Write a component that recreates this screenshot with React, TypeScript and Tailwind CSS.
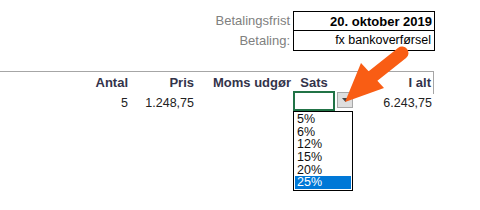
import React from "react";

const items = ["5%", "6%", "12%", "15%", "20%", "25%"];

export default function App() {
  return (
    <div
      className="relative w-[480px] h-[210px] overflow-hidden bg-white"
      style={{ fontFamily: '"Liberation Sans", Arial, sans-serif' }}
    >
      {/* Top info box */}
      <div className="flex pt-[11px]">
        <div className="w-[293px] pr-[3px] flex flex-col items-end text-[13px] text-[#808080]">
          <div className="h-[20px] leading-[20px]">Betalingsfrist</div>
          <div className="h-[20px] leading-[20px]">Betaling:</div>
        </div>
        <div className="w-[142px] border border-black">
          <div className="h-[19px] leading-[19px] text-right pr-[2px] text-[13px] font-bold text-black border-b border-black">
            20. oktober 2019
          </div>
          <div className="h-[19px] leading-[19px] text-right pr-[3px] text-[12.5px] text-black">
            fx bankoverførsel
          </div>
        </div>
      </div>

      {/* Table */}
      <div className="mt-[20px] w-[434px]">
        <div className="grid grid-cols-[130px_66px_97px_42px_99px] h-[20px] border-t border-[#a6a6a6] text-[13px] font-bold text-[#33334a] leading-[22px]">
          <div className="text-right pr-[2px]">Antal</div>
          <div className="text-right pr-[2px]">Pris</div>
          <div className="text-right pr-[2px]">Moms udgør</div>
          <div className="text-center">Sats</div>
          <div className="text-right pr-[2px] border-r border-[#a6a6a6]">I alt</div>
        </div>
        <div className="grid grid-cols-[130px_66px_97px_42px_99px] h-[20px] text-[12.5px] text-[#222] leading-[24px]">
          <div className="text-right pr-[2px]">5</div>
          <div className="text-right pr-[2px]">1.248,75</div>
          <div></div>
          <div className="relative">
            <div className="h-[20px] w-[42px] border-2 border-[#217346]"></div>
            <div className="absolute right-[-1px] bottom-[-1px] w-[4px] h-[4px] bg-[#217346] border border-white"></div>
            {/* dropdown button */}
            <div className="absolute left-[44px] top-[1px] w-[16px] h-[16px] bg-[#dedede] border border-[#a8a8a8] flex items-center justify-center">
              <svg width="7" height="4" viewBox="0 0 7 4">
                <polygon points="0,0 7,0 3.5,4" fill="#444" />
              </svg>
            </div>
            {/* list */}
            <div className="absolute left-0 top-[20px] w-[60px] h-[80px] border border-black bg-white p-[1px] z-10 flex flex-col">
              {items.map((it, i) => (
                <div
                  key={it}
                  className={
                    "h-[13px] leading-[13px] pl-[2px] text-[12.5px] overflow-hidden " +
                    (i === items.length - 1 ? "bg-[#0078d7] text-white" : "text-[#111]")
                  }
                >
                  {it}
                </div>
              ))}
            </div>
          </div>
          <div className="text-right pr-[2px]">6.243,75</div>
        </div>
      </div>

      {/* Orange arrow overlay */}
      <svg className="absolute left-0 top-0 z-20 pointer-events-none" width="480" height="210" viewBox="0 0 480 210">
        <line x1="368" y1="80" x2="402" y2="53" stroke="#f95d14" strokeWidth="13" strokeLinecap="round" />
        <polygon points="345,102 361,63 384,88" fill="#f95d14" />
      </svg>
    </div>
  );
}
